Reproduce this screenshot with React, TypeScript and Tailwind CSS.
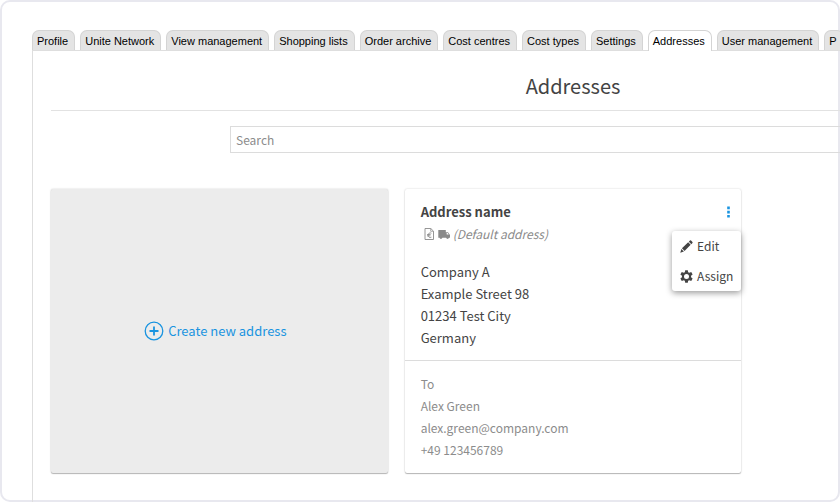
import React from "react";

const tabs = [
  "Profile",
  "Unite Network",
  "View management",
  "Shopping lists",
  "Order archive",
  "Cost centres",
  "Cost types",
  "Settings",
  "Addresses",
  "User management",
  "P",
];

function PlusCircleIcon() {
  return (
    <svg className="size-5" viewBox="0 0 20 20" fill="none" stroke="currentColor" aria-hidden="true">
      <circle cx="10" cy="10" r="8.8" strokeWidth="1.3" />
      <path d="M10 5.5v9M5.5 10h9" strokeWidth="1.8" />
    </svg>
  );
}

function InvoiceIcon() {
  return (
    <svg className="h-3 w-[11px]" viewBox="0 0 11 12" fill="none" stroke="currentColor" aria-hidden="true">
      <path d="M1 .5h5.800L9.500 3.200v8.300H1z" strokeWidth=".9" />
      <path d="M6.700.6v2.700h2.700" strokeWidth=".7" />
      <path d="M7.400 5.200C5.700 4.300 4.200 5.300 4.200 7.200s1.500 2.900 3.200 2M3 6.600h3.600M3 7.900h3.400" strokeWidth=".9" />
    </svg>
  );
}

function TruckIcon() {
  return (
    <svg className="h-3 w-3" viewBox="0 0 12 12" fill="currentColor" aria-hidden="true">
      <path d="M.3 2h7.500v2.200H10L12 7v2.800h-1a1.500 1.500 0 0 1-2.900 0H4.400a1.500 1.500 0 0 1-2.900 0H.3z" />
      <path d="M8.700 5h1l1.100 1.600H8.700z" fill="#fff" />
    </svg>
  );
}

function DotsIcon() {
  return (
    <svg className="h-3 w-[3px]" viewBox="0 0 3 12" fill="currentColor" aria-hidden="true">
      <path d="M.2.6h2.600v2.600H.2zM.2 4.800h2.600v2.600H.2zM.2 9h2.600v2.600H.2z" />
    </svg>
  );
}

function PencilIcon() {
  return (
    <svg className="size-[13px]" viewBox="0 0 14 14" fill="currentColor" aria-hidden="true">
      <path d="M.3 13.700l1.200-3.900 2.700 2.700zM2.100 9l6.700-6.500 2.700 2.700L4.900 11.800zM9.500 1.800l1.200-1.200q.6-.5 1.200 0l1.500 1.500q.5.6 0 1.200L12.200 4.500z" />
    </svg>
  );
}

function GearIcon() {
  return (
    <svg className="size-[13px]" viewBox="0 0 14 14" fill="currentColor" fillRule="evenodd" aria-hidden="true">
      <path d="M5.600.2h2.800l.4 2.100 1.200.7 2.100-.8 1.500 2.600-1.700 1.400v1.600l1.700 1.400-1.500 2.600-2.100-.8-1.200.7-.4 2.100H5.600l-.4-2.100L4 11l-2.100.8L.4 9.200l1.700-1.400V6.200L.4 4.800l1.500-2.600L4 3l1.200-.7zM7 4.300a2.700 2.700 0 1 0 0 5.400 2.700 2.700 0 0 0 0-5.400z" />
    </svg>
  );
}

function AddressCard() {
  return (
    <article className="relative rounded-xs bg-white shadow-[0_0_2px_rgba(0,0,0,0.2),0_1px_1px_rgba(0,0,0,0.25)]">
      <div className="h-[172px] border-b border-[#dcdcdc] px-4 pt-3">
        <div className="flex items-center justify-between">
          <h2 className="text-[13px] leading-[22px] font-bold">Address name</h2>
          <button type="button" aria-label="Address actions" className="-mr-2 px-[3px] text-[#1a94e0]">
            <DotsIcon />
          </button>
        </div>
        <p className="flex items-center gap-[3px] pl-[3px] text-xs leading-[22px] text-[#8a8a8a]">
          <InvoiceIcon />
          <TruckIcon />
          <span className="italic">(Default address)</span>
        </p>
        <address className="mt-4 text-[13px] leading-[22px] not-italic">
          Company A<br />
          Example Street 98
          <br />
          01234 Test City
          <br />
          Germany
        </address>
      </div>
      <div className="px-4 pt-3 text-xs leading-[22px] text-[#8c8c8c]">
        <p>To</p>
        <p>Alex Green</p>
        <p>alex.green@company.com</p>
        <p>+49 123456789</p>
      </div>
      <div className="absolute top-[42px] right-0 rounded-[3px] bg-white shadow-[0_2px_6px_rgba(0,0,0,0.4)]">
        <button type="button" className="flex h-[30px] items-center gap-1 px-2 text-xs">
          <PencilIcon />
          Edit
        </button>
        <button type="button" className="flex h-[30px] items-center gap-1 px-2 text-xs">
          <GearIcon />
          Assign
        </button>
      </div>
    </article>
  );
}

export default function App() {
  return (
    <div className="flex min-h-screen flex-col overflow-hidden rounded-[10px] bg-white pt-[30px] pl-8 font-['Noto_Sans_CJK_SC',sans-serif] text-[#444] shadow-[inset_0_0_0_2px_#e8e8ef]">
      <nav className="flex min-w-[1082px] gap-[5px] font-['Liberation_Sans',Arial,sans-serif] text-[11px] text-black">
        {tabs.map((tab) => (
          <a
            key={tab}
            href="#"
            aria-current={tab === "Addresses" ? "page" : undefined}
            className={
              tab === "Addresses"
                ? "relative -mb-px h-[21px] rounded-t-[7px] border border-b-0 border-[#d4d4d4] bg-white pr-[6px] pl-1 leading-5 whitespace-nowrap"
                : "h-5 rounded-t-[7px] border border-b-0 border-[#d4d4d4] bg-[#e4e4e4] pr-[6px] pl-1 leading-5 whitespace-nowrap"
            }
          >
            {tab}
          </a>
        ))}
      </nav>
      <main className="min-w-[1082px] flex-1 self-start border border-b-0 border-[#dedede] px-[18px]">
        <h1 className="border-b border-[#e2e2e2] pt-[19px] pb-2 text-center text-xl leading-8">Addresses</h1>
        <form className="mx-auto mt-[15px] w-[686px]">
          <input
            type="search"
            placeholder="Search"
            aria-label="Search"
            className="block h-[27px] w-full border border-[#dcdcdc] px-[5px] text-xs placeholder:text-[#8c8c8c]"
          />
        </form>
        <div className="mt-9 grid h-[284px] grid-cols-3 gap-[17px]">
          <button
            type="button"
            className="flex items-center justify-center gap-1 rounded-xs bg-[#ececec] pr-2 text-[13px] text-[#1a94e0] shadow-[0_0_2px_rgba(0,0,0,0.2),0_1px_1px_rgba(0,0,0,0.25)]"
          >
            <PlusCircleIcon />
            Create new address
          </button>
          <AddressCard />
        </div>
      </main>
    </div>
  );
}
